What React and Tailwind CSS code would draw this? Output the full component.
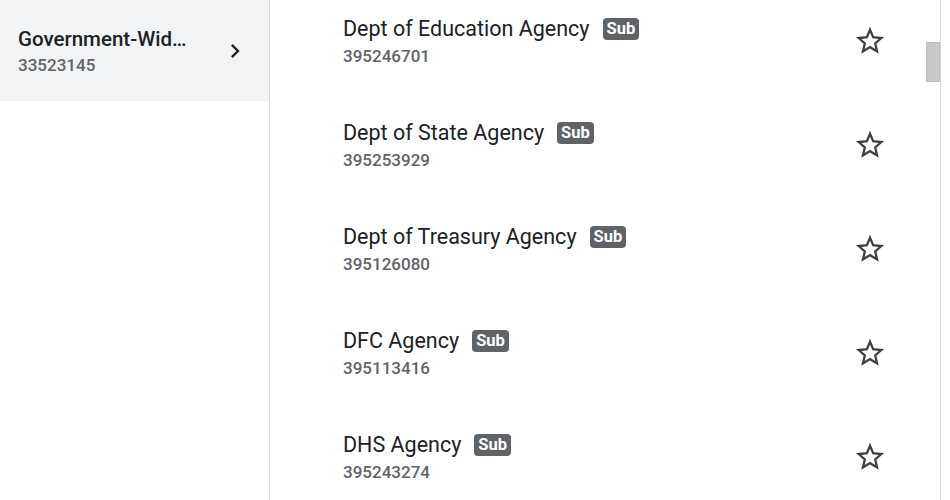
import React from 'react'

const agencies = [
  { name: 'Dept of Education Agency', id: '395246701' },
  { name: 'Dept of State Agency', id: '395253929' },
  { name: 'Dept of Treasury Agency', id: '395126080' },
  { name: 'DFC Agency', id: '395113416' },
  { name: 'DHS Agency', id: '395243274' },
]

const StarOutline = () => (
  <svg width="34" height="34" viewBox="0 0 24 24" fill="#3c4043">
    <path d="M22 9.24l-7.19-.62L12 2 9.19 8.63 2 9.24l5.46 4.73L5.82 21 12 17.27 18.18 21l-1.63-7.03L22 9.24zM12 15.4l-3.76 2.27 1-4.28-3.32-2.88 4.38-.38L12 6.1l1.71 4.04 4.38.38-3.32 2.88 1 4.28L12 15.4z" />
  </svg>
)

export default function App() {
  return (
    <div
      className="flex h-[500px] w-[950px] overflow-hidden bg-white"
      style={{ fontFamily: 'Roboto, "Liberation Sans", sans-serif' }}
    >
      {/* Left nav */}
      <div className="w-[270px] shrink-0 border-r border-[#dadce0]">
        <div className="flex h-[101px] items-center justify-between bg-[#f1f3f4] pl-[18px] pr-[20px]">
          <div className="min-w-0">
            <div className="w-[177px] truncate text-[20.5px] font-medium leading-[24px] text-[#202124]">
              Government-Wide Agency
            </div>
            <div className="mt-[4px] text-[17px] font-medium leading-[20px] text-[#5f6368]">
              33523145
            </div>
          </div>
          <svg width="28" height="28" viewBox="0 0 24 24" fill="#202124">
            <path d="M8.59 16.59L13.17 12 8.59 7.41 10 6l6 6-6 6-1.41-1.41z" />
          </svg>
        </div>
      </div>

      {/* Right list */}
      <div className="flex flex-1">
        <div className="flex-1">
          <div className="-mt-[11px]">
            {agencies.map((a) => (
              <div key={a.id} className="flex h-[104px] items-center pl-[73px] pr-[38px]">
                <div className="flex-1">
                  <div className="flex items-center">
                    <span className="text-[21.5px] leading-[24px] text-[#202124]">{a.name}</span>
                    <span className="ml-[13px] rounded-[4px] bg-[#5f6368] px-[4px] text-[16.5px] font-bold leading-[22px] text-white">
                      Sub
                    </span>
                  </div>
                  <div className="mt-[5px] text-[17px] font-medium leading-[20px] text-[#5f6368]">
                    {a.id}
                  </div>
                </div>
                <StarOutline />
              </div>
            ))}
          </div>
        </div>
        {/* Scrollbar */}
        <div className="w-[16px] shrink-0 border-r border-[#d6d6d6] bg-white pt-[42px] pl-[1px]">
          <div className="h-[40px] w-[14px] bg-[#c8c8c8] border border-[#bdbdbd]" />
        </div>
        <div className="w-[9px] shrink-0" />
      </div>
    </div>
  )
}
